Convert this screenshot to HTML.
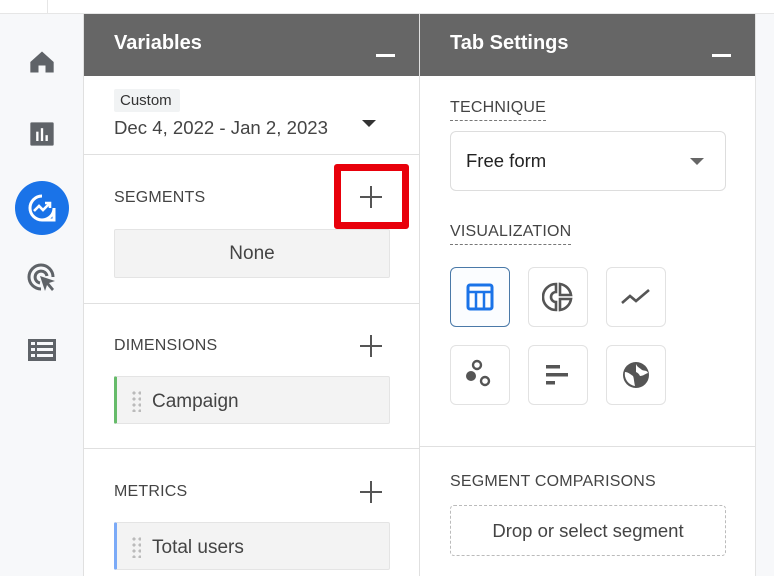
<!DOCTYPE html>
<html><head><meta charset="utf-8"><style>
*{margin:0;padding:0;box-sizing:border-box}
body{width:774px;height:576px;overflow:hidden;background:#fff;font-family:"Liberation Sans",Arial,sans-serif;position:relative;color:#444}
.a{position:absolute}
.hdr{background:#666;color:#fff;font-weight:bold;font-size:20px;height:62px;top:14px}
.hdr span{position:absolute;top:18px}
.min{position:absolute;top:40px;width:19px;height:3px;background:#fff}
.lbl{font-size:16px;color:#444;letter-spacing:.2px}
.div{height:1px;background:#e0e0e0}
.plus{width:22px;height:22px}
.plus:before,.plus:after{content:"";position:absolute;background:#555}
.plus:before{left:10px;top:0;width:2px;height:22px}
.plus:after{top:10px;left:0;height:2px;width:22px}
.chip{background:#f3f3f3;border:1px solid #e4e4e4;border-radius:2px;font-size:19px;color:#444}
.dots{position:absolute;left:14px;top:13px;width:10px;height:22px;background-image:radial-gradient(circle,#bbb 1.5px,transparent 1.8px);background-size:6px 6px}
.vb{width:60px;height:60px;border:1px solid #e2e2e2;border-radius:6px;display:flex;align-items:center;justify-content:center}
.dash{border-bottom:1px dashed #777}
</style></head><body>
<div class="a" style="left:0;top:13px;width:774px;height:1px;background:#e6e6e6"></div>
<div class="a" style="left:47px;top:0;width:1px;height:13px;background:#e6e6e6"></div>
<div class="a" style="left:0;top:14px;width:84px;height:562px;background:#f7f8fa;border-right:1px solid #e0e0e0"></div>
<div class="a" style="left:755px;top:14px;width:19px;height:562px;background:#f7f8fa;border-left:1px solid #e3e3e3"></div>
<div class="a" style="left:419px;top:14px;width:1px;height:562px;background:#e0e0e0"></div>

<svg class="a" style="left:28px;top:48px" width="28" height="28" viewBox="0 0 24 24"><path d="M12 3L2 12v9h7v-6h6v6h7v-9z" fill="#5f6368"/></svg>
<svg class="a" style="left:28px;top:120px" width="28" height="28" viewBox="0 0 24 24"><rect x="2" y="2" width="20" height="20" rx="1" fill="#5f6368"/><rect x="7" y="10" width="2" height="8" fill="#fff"/><rect x="11" y="7" width="2" height="11" fill="#fff"/><rect x="15" y="13" width="2" height="5" fill="#fff"/></svg>
<div class="a" style="left:15px;top:181px;width:54px;height:54px;border-radius:50%;background:#1a73e8"></div>
<svg class="a" style="left:26px;top:192px" width="32" height="32" viewBox="0 0 32 32"><path d="M16 4a12 12 0 1 0 12 12V28H16" fill="none" stroke="#fff" stroke-width="3"/><path d="M8 19l5-5 4 4 6-6M19 11h5v5" fill="none" stroke="#fff" stroke-width="2.6"/></svg>
<svg class="a" style="left:26px;top:262px" width="32" height="32" viewBox="0 0 32 32"><path d="M15 27A12 12 0 1 1 27 15" fill="none" stroke="#5f6368" stroke-width="3"/><path d="M14 21A6 6 0 1 1 21 14" fill="none" stroke="#5f6368" stroke-width="3"/><path d="M14 14l15 5-6 2 5 6-2 2-5-6-2 6z" fill="#5f6368"/></svg>
<svg class="a" style="left:28px;top:338px" width="28" height="24" viewBox="0 0 28 24"><rect x="0" y="1" width="28" height="22" fill="#5f6368"/><g fill="#f7f8fa"><rect x="3" y="4" width="4" height="3"/><rect x="9" y="4" width="16" height="3"/><rect x="3" y="10" width="4" height="3"/><rect x="9" y="10" width="16" height="3"/><rect x="3" y="16" width="4" height="3"/><rect x="9" y="16" width="16" height="3"/></g></svg>

<div class="a hdr" style="left:84px;width:335px"><span style="left:30px">Variables</span><div class="min" style="left:292px"></div></div>
<div class="a" style="left:114px;top:89px;width:66px;height:23px;background:#f1f3f4;border-radius:2px;font-size:15px;color:#333;padding:3px 0 0 6px">Custom</div>
<div class="a" style="left:114px;top:117px;font-size:18.6px;color:#444">Dec 4, 2022 - Jan 2, 2023</div>
<div class="a" style="left:362px;top:120px;width:0;height:0;border-left:7px solid transparent;border-right:7px solid transparent;border-top:7px solid #333"></div>
<div class="a div" style="left:84px;top:154px;width:335px"></div>
<div class="a lbl" style="left:114px;top:189px">SEGMENTS</div>
<div class="a" style="left:334px;top:164px;width:75px;height:65px;border:7px solid #e8000b;border-radius:3px;background:#fff"></div>
<div class="a plus" style="left:360px;top:186px"></div>
<div class="a chip" style="left:114px;top:229px;width:276px;height:49px;text-align:center;line-height:47px">None</div>
<div class="a div" style="left:84px;top:303px;width:335px"></div>
<div class="a lbl" style="left:114px;top:337px">DIMENSIONS</div>
<div class="a plus" style="left:360px;top:335px"></div>
<div class="a chip" style="left:114px;top:376px;width:276px;height:48px;border-left:3px solid #66bb6a"><div class="dots"></div><span style="position:absolute;left:35px;top:14px">Campaign</span></div>
<div class="a div" style="left:84px;top:448px;width:335px"></div>
<div class="a lbl" style="left:114px;top:483px">METRICS</div>
<div class="a plus" style="left:360px;top:481px"></div>
<div class="a chip" style="left:114px;top:522px;width:276px;height:48px;border-left:3px solid #7baaf7"><div class="dots"></div><span style="position:absolute;left:35px;top:14px">Total users</span></div>

<div class="a hdr" style="left:420px;width:335px"><span style="left:30px">Tab Settings</span><div class="min" style="left:292px"></div></div>
<div class="a lbl dash" style="left:450px;top:99px;padding-bottom:3px">TECHNIQUE</div>
<div class="a" style="left:450px;top:131px;width:276px;height:60px;border:1px solid #ddd;border-radius:6px;font-size:18.5px;color:#222;padding:18px 0 0 15px">Free form</div>
<div class="a" style="left:690px;top:158px;width:0;height:0;border-left:7px solid transparent;border-right:7px solid transparent;border-top:7px solid #666"></div>
<div class="a lbl dash" style="left:450px;top:223px;padding-bottom:3px">VISUALIZATION</div>

<div class="a vb" style="left:450px;top:267px;border-color:#4a79a8;background:#fbfdff"><svg width="30" height="30" viewBox="0 0 30 30"><rect x="3" y="3" width="24" height="24" rx="2" fill="none" stroke="#1a73e8" stroke-width="3"/><path d="M3 10h24M11 10v17M19 10v17" stroke="#1a73e8" stroke-width="2.5"/></svg></div>
<div class="a vb" style="left:528px;top:267px"><svg width="32" height="32" viewBox="0 0 32 32"><path d="M14 3A13 13 0 0 0 14 29V21a5 5 0 0 1 0-10z" fill="none" stroke="#555" stroke-width="2.6"/><path d="M18 3a13 13 0 0 1 11 11H18zM18 18h11a13 13 0 0 1-11 11z" fill="none" stroke="#555" stroke-width="2.6"/></svg></div>
<div class="a vb" style="left:606px;top:267px"><svg width="32" height="32" viewBox="0 0 32 32"><path d="M2 22l8-7 6 5 13-11" fill="none" stroke="#555" stroke-width="2.6"/></svg></div>
<div class="a vb" style="left:450px;top:345px"><svg width="32" height="32" viewBox="0 0 32 32"><circle cx="13" cy="6" r="4" fill="none" stroke="#555" stroke-width="2.4"/><circle cx="7" cy="17" r="5" fill="#555"/><circle cx="21" cy="22" r="4" fill="none" stroke="#555" stroke-width="2.4"/></svg></div>
<div class="a vb" style="left:528px;top:345px"><svg width="32" height="32" viewBox="0 0 32 32"><rect x="4" y="6" width="14" height="3.5" fill="#555"/><rect x="4" y="14" width="22" height="3.5" fill="#555"/><rect x="4" y="22" width="9" height="3.5" fill="#555"/></svg></div>
<div class="a vb" style="left:606px;top:345px"><svg width="32" height="32" viewBox="0 0 32 32"><circle cx="16" cy="16" r="13" fill="#555"/><path d="M5 13c3 0 5 2 8 4 1 2 1 6 2 10A12 12 0 0 1 5 13z" fill="#fff"/><path d="M16 5c1 3 4 4 6 6 2 1 5 0 6 3-3 1-5 3-8 3-1-2-2-3-4-4z" fill="#fff"/></svg></div>

<div class="a div" style="left:420px;top:446px;width:335px"></div>
<div class="a lbl" style="left:450px;top:473px">SEGMENT COMPARISONS</div>
<div class="a" style="left:450px;top:505px;width:276px;height:51px;border:1px dashed #bbb;border-radius:4px;text-align:center;line-height:49px;font-size:18.5px;color:#444">Drop or select segment</div>
</body></html>
